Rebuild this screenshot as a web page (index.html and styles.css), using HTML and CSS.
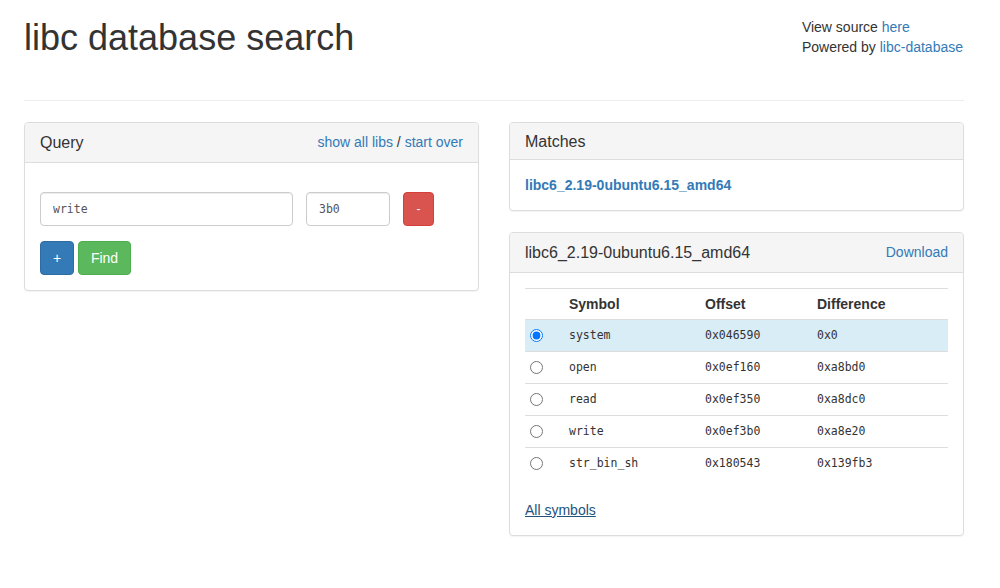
FILE: index.html
```html
<!DOCTYPE html>
<html>
<head>
<meta charset="utf-8">
<title>libc database search</title>
<link rel="stylesheet" href="styles.css">
</head>
<body>
<div class="container">
  <div class="header">
    <h1 class="title">libc database search</h1>
    <div class="credits">
      <div>View source <a href="#">here</a></div>
      <div>Powered by <a href="#">libc-database</a></div>
    </div>
  </div>
  <hr class="divider">
  <div class="row">
    <div class="col">
      <div class="panel">
        <div class="panel-heading tall">
          <span class="panel-title">Query</span>
          <span class="heading-links"><a href="#">show all libs</a> / <a href="#">start over</a></span>
        </div>
        <div class="panel-body query-body">
          <div class="query-row">
            <input class="form-control sym-input" type="text" value="write">
            <input class="form-control addr-input" type="text" value="3b0">
            <button class="btn btn-danger btn-minus">-</button>
          </div>
          <div class="btn-row">
            <button class="btn btn-primary btn-plus">+</button>
            <button class="btn btn-success">Find</button>
          </div>
        </div>
      </div>
    </div>
    <div class="col">
      <div class="panel matches">
        <div class="panel-heading">
          <span class="panel-title">Matches</span>
        </div>
        <div class="panel-body">
          <a href="#" class="match-link">libc6_2.19-0ubuntu6.15_amd64</a>
        </div>
      </div>
      <div class="panel">
        <div class="panel-heading tall">
          <span class="panel-title">libc6_2.19-0ubuntu6.15_amd64</span>
          <span class="heading-links"><a href="#">Download</a></span>
        </div>
        <div class="panel-body">
          <table class="sym-table">
            <colgroup>
              <col class="c-radio"><col class="c-sym"><col class="c-off"><col>
            </colgroup>
            <tr class="head-row">
              <th></th><th>Symbol</th><th>Offset</th><th>Difference</th>
            </tr>
            <tr class="info">
              <td class="radio-cell"><input type="radio" name="base" checked></td>
              <td class="mono">system</td><td class="mono">0x046590</td><td class="mono">0x0</td>
            </tr>
            <tr>
              <td class="radio-cell"><input type="radio" name="base"></td>
              <td class="mono">open</td><td class="mono">0x0ef160</td><td class="mono">0xa8bd0</td>
            </tr>
            <tr>
              <td class="radio-cell"><input type="radio" name="base"></td>
              <td class="mono">read</td><td class="mono">0x0ef350</td><td class="mono">0xa8dc0</td>
            </tr>
            <tr>
              <td class="radio-cell"><input type="radio" name="base"></td>
              <td class="mono">write</td><td class="mono">0x0ef3b0</td><td class="mono">0xa8e20</td>
            </tr>
            <tr>
              <td class="radio-cell"><input type="radio" name="base"></td>
              <td class="mono">str_bin_sh</td><td class="mono">0x180543</td><td class="mono">0x139fb3</td>
            </tr>
          </table>
          <a href="#" class="all-link">All symbols</a>
        </div>
      </div>
    </div>
  </div>
</div>
</body>
</html>
```
FILE: styles.css
```css
* { box-sizing: border-box; }
html, body { margin: 0; padding: 0; background: #fff; }
body {
  font-family: "Liberation Sans", Arial, sans-serif;
  font-size: 14px;
  line-height: 20px;
  color: #333;
}
a { color: #337ab7; text-decoration: none; }
.container { width: 940px; margin-left: 24px; }
.header {
  display: flex;
  justify-content: space-between;
  align-items: flex-start;
  padding-top: 17px;
}
.title {
  margin: 1px 0 2px 0;
  font-size: 36px;
  font-weight: 500;
  line-height: 40px;
  color: #333;
}
.credits { margin-right: 1px; }
.divider {
  margin: 40px 0 0 0;
  border: 0;
  border-top: 1px solid #eee;
  height: 0;
}
.row {
  display: flex;
  gap: 30px;
  margin-top: 21px;
}
.col { width: 455px; }
.panel {
  border: 1px solid #ddd;
  border-radius: 4px;
  background: #fff;
  box-shadow: 0 1px 1px rgba(0,0,0,.05);
  margin-bottom: 20px;
}
.panel.matches { margin-bottom: 21px; }
.panel-heading {
  background: #f5f5f5;
  border-bottom: 1px solid #ddd;
  border-radius: 3px 3px 0 0;
  padding: 10px 15px 9px 15px;
  display: flex;
  justify-content: space-between;
  align-items: center;
  height: 37px;
}
.panel-heading.tall { height: 40px; padding-bottom: 10px; }
.panel-title { font-size: 16px; line-height: 18px; color: #333; }
.heading-links { font-size: 14px; line-height: 19px; }
.panel-body { padding: 15px; }
.query-body { padding-top: 29px; }
.query-row { display: flex; gap: 13px; }
.form-control {
  height: 34px;
  padding: 6px 12px;
  font-family: "DejaVu Sans Mono", "Liberation Mono", monospace;
  font-size: 11.5px;
  color: #555;
  border: 1px solid #ccc;
  border-radius: 4px;
  box-shadow: inset 0 1px 1px rgba(0,0,0,.075);
  background: #fff;
  outline: none;
}
.sym-input { width: 253px; }
.addr-input { width: 84px; }
.btn {
  height: 34px;
  padding: 6px 12px;
  font-family: "Liberation Sans", Arial, sans-serif;
  font-size: 14px;
  line-height: 20px;
  border: 1px solid transparent;
  border-radius: 4px;
  color: #fff;
}
.btn-danger { background: #d9534f; border-color: #d43f3a; }
.btn-primary { background: #337ab7; border-color: #2e6da4; }
.btn-success { background: #5cb85c; border-color: #4cae4c; width: 53px; padding: 6px 0; }
.btn-minus { width: 31px; padding: 6px 0; font-size: 12px; }
.btn-plus { width: 34px; padding: 6px 0; }
.btn-row { display: flex; gap: 4px; margin-top: 15px; }
.match-link { font-weight: bold; }
.sym-table {
  width: 100%;
  border-collapse: collapse;
  table-layout: fixed;
  margin-bottom: 20px;
}
.c-radio { width: 36px; }
.c-sym { width: 136px; }
.c-off { width: 112px; }
.sym-table th, .sym-table td {
  border-top: 1px solid #ddd;
  padding: 6px 8px;
  height: 32px;
  line-height: 19px;
  text-align: left;
  vertical-align: middle;
}
.sym-table th {
  font-weight: bold;
  font-size: 14px;
  color: #333;
  height: 31px;
  padding-top: 6px;
  padding-bottom: 5px;
}
.mono {
  font-family: "DejaVu Sans Mono", "Liberation Mono", monospace;
  font-size: 11.5px;
  color: #333;
}
.radio-cell { padding-left: 5px !important; }
.radio-cell input {
  margin: 0;
  width: 13px;
  height: 13px;
  display: block;
}
tr.info td { background: #d9edf7; }
.all-link { color: #23527c; text-decoration: underline; }
```
